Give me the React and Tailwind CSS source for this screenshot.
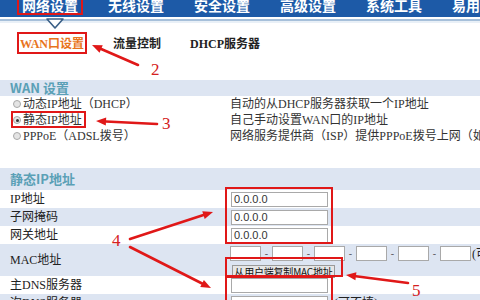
import React from "react"

const serif = "font-['Liberation_Serif','Noto_Sans_CJK_SC',serif]"
const sans = "font-['Noto_Sans_CJK_SC','Liberation_Sans',sans-serif]"

function Arrow({ x1, y1, x2, y2 }) {
    // tail (x1,y1) -> head (x2,y2)
    const dx = x2 - x1
    const dy = y2 - y1
    const len = Math.hypot(dx, dy)
    const ux = dx / len
    const uy = dy / len
    const hl = 10
    const hw = 4
    const bx = x2 - ux * hl
    const by = y2 - uy * hl
    const pts = `${x2},${y2} ${bx - uy * hw},${by + ux * hw} ${bx + uy * hw},${by - ux * hw}`
    return (
        <g>
            <line x1={x1} y1={y1} x2={bx} y2={by} stroke="#e01818" strokeWidth="2.6" strokeLinecap="round" />
            <polygon points={pts} fill="#e01818" />
        </g>
    )
}

function Radio({ checked }) {
    return (
        <span className="shrink-0 w-[8px] h-[8px] rounded-full border border-[#a8a8a8] bg-[#e4e4e4] flex items-center justify-center mr-[2px]">
            {checked && <span className="w-[3px] h-[3px] rounded-full bg-[#333]" />}
        </span>
    )
}

function Field({ value = "" }) {
    return (
        <div className="shrink-0 w-[97px] h-[15px] border border-[#a9a9a9] bg-white text-[11px] leading-[13px] pl-[2px] text-[#333] font-['Liberation_Sans',sans-serif]">
            {value}
        </div>
    )
}

export default function App() {
    const nav = ["网络设置", "无线设置", "安全设置", "高级设置", "系统工具", "易用"]
    const macBoxes = [0, 1, 2, 3, 4, 5]

    return (
        <div className={`relative w-[480px] h-[300px] overflow-hidden bg-white text-[#222] ${serif}`}>
            {/* top nav */}
            <div className={`h-[17px] bg-[#1d5aa7] flex gap-[30px] pl-[22px] overflow-hidden ${sans}`}>
                {nav.map(n => (
                    <span key={n} className="shrink-0 text-[14px] leading-[14px] font-bold text-white whitespace-nowrap -mt-[2px]">{n}</span>
                ))}
            </div>
            <div className="h-[2px] bg-white" />
            <div className="h-[2px] bg-[#a7c0da]" />
            <div className="h-[2px] bg-[#e9f0f7]" />

            {/* sub nav */}
            <div className="mt-[11px] h-[20px] flex items-center pl-[20px] text-[12px] font-bold">
                <span className="text-[#e8741c] w-[62px] whitespace-nowrap">WAN口设置</span>
                <span className="ml-[31px] w-[48px] whitespace-nowrap">流量控制</span>
                <span className="ml-[29px] whitespace-nowrap">DHCP服务器</span>
            </div>

            {/* WAN settings */}
            <div className={`mt-[26px] h-[16px] bg-[#dde5f2] pl-[10px] text-[13px] leading-[16px] font-bold text-[#5aa0b6] ${sans}`}>WAN 设置</div>
            <div className="text-[12px] text-[#333]">
                {[
                    ["动态IP地址（DHCP）", "自动的从DHCP服务器获取一个IP地址", false],
                    ["静态IP地址", "自己手动设置WAN口的IP地址", true],
                    ["PPPoE（ADSL拨号）", "网络服务提供商（ISP）提供PPPoE拨号上网（如电信ADSL）", false],
                ].map(([a, b, c]) => (
                    <div key={a} className="h-[16px] flex items-center whitespace-nowrap">
                        <div className="shrink-0 w-[230px] flex items-center pl-[13px]">
                            <Radio checked={c} />
                            <span>{a}</span>
                        </div>
                        <span>{b}</span>
                    </div>
                ))}
            </div>

            {/* static IP */}
            <div className={`mt-[24px] h-[22px] bg-[#dde5f2] pl-[10px] text-[13px] leading-[22px] font-bold text-[#5aa0b6] ${sans}`}>静态IP地址</div>
            <div className="text-[12px] text-[#222]">
                {[
                    ["IP地址", "0.0.0.0", "bg-white"],
                    ["子网掩码", "0.0.0.0", "bg-[#dde5f2]"],
                    ["网关地址", "0.0.0.0", "bg-white"],
                ].map(([l, v, bg]) => (
                    <div key={l} className={`h-[18px] flex items-center ${bg}`}>
                        <span className="shrink-0 w-[231px] pl-[10px]">{l}</span>
                        <Field value={v} />
                    </div>
                ))}
                <div className="h-[32px] flex items-center bg-[#dde5f2] whitespace-nowrap">
                    <span className="shrink-0 w-[230px] pl-[10px]">MAC地址</span>
                    <div className="shrink-0 flex flex-col gap-[2px] pt-[2px]">
                        <div className="flex items-center">
                            {macBoxes.map(i => (
                                <React.Fragment key={i}>
                                    <div className="shrink-0 w-[31px] h-[15px] border border-[#a9a9a9] bg-white" />
                                    {i < 5 && <span className="shrink-0 w-[11px] text-center text-[10px] leading-[15px] text-[#555]">-</span>}
                                </React.Fragment>
                            ))}
                            <span className="ml-[1px]">(可不填)</span>
                        </div>
                        <button className={`ml-[2px] w-[103px] h-[13px] border border-[#9a9a9a] bg-[#e6e6e6] text-[10px] leading-[11px] tracking-[-0.2px] text-[#111] whitespace-nowrap ${sans}`}>从用户端复制MAC地址</button>
                    </div>
                </div>
                <div className="h-[18px] flex items-center bg-white">
                    <span className="shrink-0 w-[231px] pl-[10px]">主DNS服务器</span>
                    <Field />
                </div>
                <div className="h-[18px] flex items-center bg-[#dde5f2] whitespace-nowrap">
                    <span className="shrink-0 w-[231px] pl-[10px]">次DNS服务器</span>
                    <Field />
                    <span className="ml-[6px]">(可不填)</span>
                </div>
            </div>

            {/* nav indicator */}
            <svg className="absolute left-[46px] top-[18px]" width="18" height="11" viewBox="0 0 18 11">
                <polygon points="1,1 17,1 9,10" fill="#ffffff" stroke="#3a5f86" strokeWidth="1.6" strokeLinejoin="round" />
            </svg>

            {/* annotations */}
            <div className="absolute left-[17px] -top-[3px] w-[66px] h-[18px] border-2 border-[#e01818]" />
            <div className="absolute left-[17px] top-[32px] w-[70px] h-[22px] border-2 border-[#e01818]" />
            <div className="absolute left-[11px] top-[111px] w-[75px] h-[17px] border-2 border-[#e01818]" />
            <div className="absolute left-[225px] top-[187px] w-[108px] h-[57px] border-2 border-[#e01818]" />
            <div className="absolute left-[225px] top-[257px] w-[118px] h-[20px] border-2 border-[#e01818]" />
            <div className="absolute left-[225px] top-[276px] w-[108px] h-[40px] border-2 border-[#e01818]" />

            <svg className="absolute inset-0 pointer-events-none" width="480" height="300">
                <Arrow x1={138} y1={65} x2={92} y2={45} />
                <Arrow x1={157} y1={124} x2={96} y2={121} />
                <Arrow x1={130} y1={239} x2={213} y2={212} />
                <Arrow x1={130} y1={247} x2={211} y2={288} />
                <Arrow x1={408} y1={283} x2={346} y2={275} />
            </svg>
            <span className="absolute left-[151px] top-[60px] text-[17px] leading-[20px] text-[#d42020] font-['Liberation_Serif',serif]">2</span>
            <span className="absolute left-[162px] top-[114px] text-[17px] leading-[20px] text-[#d42020] font-['Liberation_Serif',serif]">3</span>
            <span className="absolute left-[112px] top-[231px] text-[17px] leading-[20px] text-[#d42020] font-['Liberation_Serif',serif]">4</span>
            <span className="absolute left-[412px] top-[281px] text-[17px] leading-[20px] text-[#d42020] font-['Liberation_Serif',serif]">5</span>
        </div>
    )
}
